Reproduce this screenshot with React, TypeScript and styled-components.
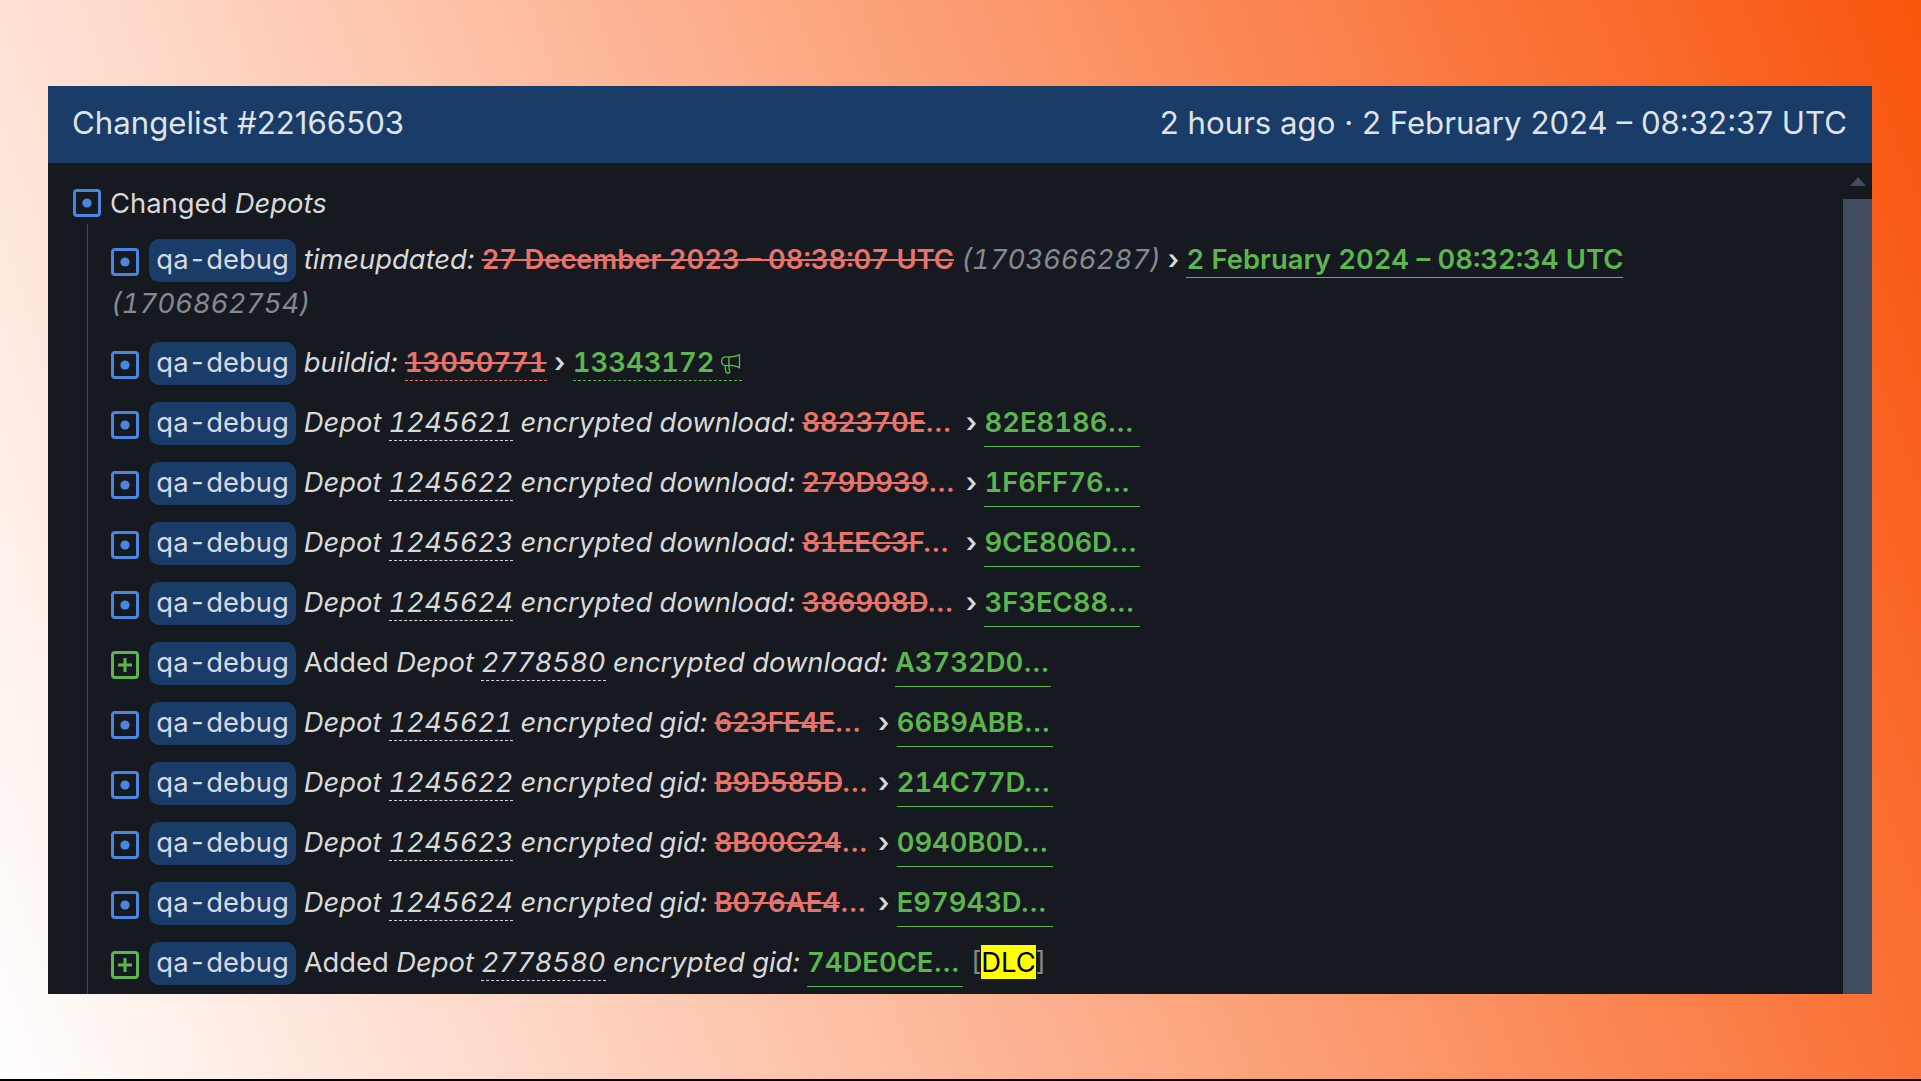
import React from "react";
import styled, { createGlobalStyle } from "styled-components";
import { GoMegaphone } from "react-icons/go";

const GlobalStyle = createGlobalStyle`
  html, body {
    margin: 0;
    padding: 0;
    background: #000;
  }
`;

type Row = {
  added?: boolean;
  depot: string;
  label: string;
  from?: string;
  to: string;
  dlc?: boolean;
};

const rows: Row[] = [
  { depot: "1245621", label: "download", from: "882370E", to: "82E8186" },
  { depot: "1245622", label: "download", from: "279D939", to: "1F6FF76" },
  { depot: "1245623", label: "download", from: "81EEC3F", to: "9CE806D" },
  { depot: "1245624", label: "download", from: "386908D", to: "3F3EC88" },
  { added: true, depot: "2778580", label: "download", to: "A3732D0" },
  { depot: "1245621", label: "gid", from: "623FE4E", to: "66B9ABB" },
  { depot: "1245622", label: "gid", from: "B9D585D", to: "214C77D" },
  { depot: "1245623", label: "gid", from: "8B00C24", to: "0940B0D" },
  { depot: "1245624", label: "gid", from: "B076AE4", to: "E97943D" },
  { added: true, depot: "2778580", label: "gid", to: "74DE0CE", dlc: true },
];

const ChangeIcon = ({ added }: { added?: boolean }) => (
  <IconBox viewBox="0 0 28 28" fill="none">
    <rect
      x="1.5"
      y="1.5"
      width="25"
      height="25"
      rx="2.5"
      stroke={added ? "#5cb54f" : "#4a86e0"}
      strokeWidth="3"
    />
    {added ? (
      <path d="M14 7v14M7 14h14" stroke="#5cb54f" strokeWidth="3" />
    ) : (
      <circle cx="14" cy="14" r="4.6" fill="#4a86e0" />
    )}
  </IconBox>
);

const App = () => {
  return (
    <Page>
      <GlobalStyle />
      <Win>
        <Header>
          <span>Changelist #22166503</span>
          <span>2 hours ago · 2 February 2024 – 08:32:37 UTC</span>
        </Header>
        <Body>
          <Content>
            <Title>
              <ChangeIcon />
              <span>
                Changed <em>Depots</em>
              </span>
            </Title>
            <List>
              <Item>
                <ChangeIcon /> <Pill>qa-debug</Pill> <em>timeupdated:</em>{" "}
                <Removed>27 December 2023 – 08:38:07 UTC</Removed>{" "}
                <Muted>(1703666287)</Muted> <Arrow>›</Arrow>{" "}
                <Added>2 February 2024 – 08:32:34 UTC</Added> <Muted>(1706862754)</Muted>
              </Item>
              <Item>
                <ChangeIcon /> <Pill>qa-debug</Pill> <em>buildid:</em>{" "}
                <DashedRed>
                  <s>13050771</s>
                </DashedRed>{" "}
                <Arrow>›</Arrow>{" "}
                <DashedGreen>
                  13343172 <GoMegaphone size={22} />
                </DashedGreen>
              </Item>
              {rows.map((r, i) => (
                <Item key={i}>
                  <ChangeIcon added={r.added} /> <Pill>qa-debug</Pill>{" "}
                  {r.added && "Added "}
                  <em>
                    Depot <DepotLink>{r.depot}</DepotLink> encrypted {r.label}:
                  </em>{" "}
                  {r.from && (
                    <>
                      <Hash>
                        <s>{r.from}</s>…
                      </Hash>{" "}
                      <Arrow>›</Arrow>{" "}
                    </>
                  )}
                  <Hash $added>{r.to}…</Hash>
                  {r.dlc && (
                    <Dlc>
                      {" "}
                      [<mark>DLC</mark>]
                    </Dlc>
                  )}
                </Item>
              ))}
            </List>
          </Content>
          <ScrollTrack>
            <ScrollArrow />
            <ScrollThumb />
          </ScrollTrack>
        </Body>
      </Win>
    </Page>
  );
};

const Page = styled.div`
  box-sizing: border-box;
  width: 1921px;
  height: 1081px;
  padding: 86px 49px 0 48px;
  border-bottom: 2px solid #000;
  background: linear-gradient(70deg, #ffffff 0%, #f9540c 100%);
  font-family: Inter, "Liberation Sans", sans-serif;
  font-variant-numeric: tabular-nums;
  overflow: hidden;
`;

const Win = styled.div`
  height: 908px;
  display: flex;
  flex-direction: column;
  background: #16191f;
  color: #d9d9d9;
  font-size: 27.4px;
  overflow: hidden;
`;

const Header = styled.div`
  flex: none;
  box-sizing: border-box;
  height: 77px;
  padding: 0 25px 4px 24px;
  display: flex;
  align-items: center;
  justify-content: space-between;
  background: #193c68;
  color: #dfe3e8;
  font-size: 31.2px;
  font-variant-numeric: normal;
`;

const Body = styled.div`
  flex: 1;
  min-height: 0;
  display: flex;
`;

const Content = styled.div`
  flex: 1;
  min-width: 0;
  padding: 18px 0 0 25px;
  overflow: hidden;
`;

const Title = styled.div`
  display: flex;
  align-items: center;
  gap: 9px;
  height: 43px;
`;

const List = styled.div`
  margin: 0 0 0 14px;
  padding: 6px 0 0 23px;
  border-left: 1px solid #3c4657;
  height: 800px;
`;

const Item = styled.div`
  max-width: 1530px;
  padding-top: 8px;
  padding-bottom: 8px;
  line-height: 43px;
`;

const IconBox = styled.svg`
  width: 28px;
  height: 28px;
  vertical-align: -7px;
  flex: none;
`;

const Pill = styled.span`
  display: inline-block;
  height: 43px;
  margin-left: 2.5px;
  padding: 0 7.5px;
  border-radius: 10px;
  background: #193c68;
  color: #d6dbe2;
  line-height: 41px;
`;

const Muted = styled.em`
  color: #868a90;
`;

const Arrow = styled.span`
  color: #d9d9d9;
  font-weight: 600;
`;

const Removed = styled.s`
  color: #e8736b;
  font-weight: 600;
`;

const Added = styled.span`
  display: inline-block;
  line-height: 36px;
  color: #5cb54f;
  font-weight: 600;
  border-bottom: 1.5px solid #5cb54f;
`;

const DashedRed = styled.span`
  display: inline-block;
  line-height: 36px;
  color: #e8736b;
  font-weight: 600;
  border-bottom: 1px dashed #e8736b;
`;

const DashedGreen = styled(DashedRed)`
  color: #5cb54f;
  border-bottom-color: #5cb54f;
  svg {
    vertical-align: -3px;
    margin-left: -2px;
  }
`;

const DepotLink = styled.span`
  display: inline-block;
  line-height: 36px;
  border-bottom: 1px dashed #d9d9d9;
`;

const Hash = styled.span<{ $added?: boolean }>`
  display: inline-block;
  box-sizing: border-box;
  width: 156px;
  line-height: 36px;
  padding-bottom: 6px;
  margin-bottom: -5px;
  white-space: nowrap;
  font-weight: 600;
  color: ${(p) => (p.$added ? "#5cb54f" : "#e8736b")};
  border-bottom: ${(p) => (p.$added ? "1.5px solid #5cb54f" : "1.5px solid transparent")};
`;

const Dlc = styled.span`
  color: #868a90;
  mark {
    background: #ffff00;
    color: #000;
    padding: 0;
  }
`;

const ScrollTrack = styled.div`
  flex: none;
  width: 29px;
  display: flex;
  flex-direction: column;
  align-items: center;
`;

const ScrollArrow = styled.div`
  margin-top: 14px;
  width: 0;
  height: 0;
  border-left: 8px solid transparent;
  border-right: 8px solid transparent;
  border-bottom: 9px solid #424c60;
`;

const ScrollThumb = styled.div`
  margin-top: 13px;
  align-self: stretch;
  flex: 1;
  background: #414b60;
`;

export default App;
